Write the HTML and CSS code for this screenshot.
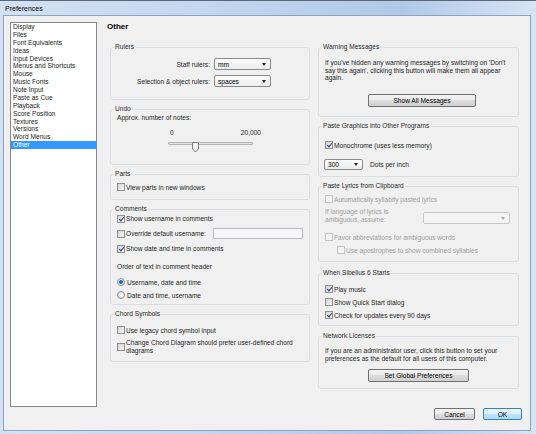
FILE: index.html
```html
<!DOCTYPE html>
<html>
<head>
<meta charset="UTF-8">
<title>Preferences</title>
<link rel="stylesheet" href="styles.css">
</head>
<body>
<div class="window">
	<div class="titlebar">Preferences</div>
	<div class="client">
		<ul class="pages">
			<li>Display</li>
			<li>Files</li>
			<li>Font Equivalents</li>
			<li>Ideas</li>
			<li>Input Devices</li>
			<li>Menus and Shortcuts</li>
			<li>Mouse</li>
			<li>Music Fonts</li>
			<li>Note Input</li>
			<li>Paste as Cue</li>
			<li>Playback</li>
			<li>Score Position</li>
			<li>Textures</li>
			<li>Versions</li>
			<li>Word Menus</li>
			<li class="sel">Other</li>
		</ul>
		<div class="main">
			<h1>Other</h1>
			<div class="cols">
				<div class="col">
					<fieldset class="g-rulers">
						<legend>Rulers</legend>
						<div class="field"><label>Staff rulers:</label><div class="select">mm</div></div>
						<div class="field"><label>Selection &amp; object rulers:</label><div class="select">spaces</div></div>
					</fieldset>
					<fieldset class="g-undo">
						<legend>Undo</legend>
						<div class="line">Approx. number of notes:</div>
						<div class="ticks"><span>0</span><span>20,000</span></div>
						<div class="slider">
							<div class="track"></div>
							<svg class="thumb" style="left:24px" width="7" height="11" viewBox="0 0 7 11"><path d="M0.5 0.5h6v6.5l-3 3-3-3z" fill="#f3f3f3" stroke="#7b7b7b"/></svg>
						</div>
					</fieldset>
					<fieldset class="g-parts">
						<legend>Parts</legend>
						<div class="row chk"><span class="box"></span>View parts in new windows</div>
					</fieldset>
					<fieldset class="g-comments">
						<legend>Comments</legend>
						<div class="row chk on"><span class="box"></span>Show username in comments</div>
						<div class="row chk"><span class="box"></span>Override default username:<span class="input"></span></div>
						<div class="row chk on"><span class="box"></span>Show date and time in comments</div>
						<div class="line order">Order of text in comment header</div>
						<div class="row radio on"><span class="dot"></span>Username, date and time</div>
						<div class="row radio"><span class="dot"></span>Date and time, username</div>
					</fieldset>
					<fieldset class="g-chords">
						<legend>Chord Symbols</legend>
						<div class="row chk"><span class="box"></span>Use legacy chord symbol input</div>
						<div class="row chk tall"><span class="box"></span><span>Change Chord Diagram should prefer user-defined chord<br>diagrams</span></div>
					</fieldset>
				</div>
				<div class="col">
					<fieldset class="g-warn">
						<legend>Warning Messages</legend>
						<p class="note">If you've hidden any warning messages by switching on 'Don't<br>say this again', clicking this button will make them all appear<br>again.</p>
						<button class="btn show-all">Show All Messages</button>
					</fieldset>
					<fieldset class="g-graphics">
						<legend>Paste Graphics into Other Programs</legend>
						<div class="row chk on"><span class="box"></span>Monochrome (uses less memory)</div>
						<div class="dpi"><div class="select">300</div><span>Dots per inch</span></div>
					</fieldset>
					<fieldset class="g-lyrics">
						<legend>Paste Lyrics from Clipboard</legend>
						<div class="row chk off"><span class="box"></span>Automatically syllabify pasted lyrics</div>
						<div class="lang"><span>If language of lyrics is<br>ambiguous, assume:</span><div class="select off"></div></div>
						<div class="row chk off favor"><span class="box"></span>Favor abbreviations for ambiguous words</div>
						<div class="row chk off sub"><span class="box"></span>Use apostrophes to show combined syllables</div>
					</fieldset>
					<fieldset class="g-start">
						<legend>When Sibelius 6 Starts</legend>
						<div class="row chk on"><span class="box"></span>Play music</div>
						<div class="row chk"><span class="box"></span>Show Quick Start dialog</div>
						<div class="row chk on"><span class="box"></span>Check for updates every 90 days</div>
					</fieldset>
					<fieldset class="g-network">
						<legend>Network Licenses</legend>
						<p class="note">If you are an administrator user, click this button to set your<br>preferences as the default for all users of this computer.</p>
						<button class="btn global">Set Global Preferences</button>
					</fieldset>
				</div>
			</div>
			<div class="footer">
				<button class="btn cancel">Cancel</button>
				<button class="btn ok">OK</button>
			</div>
		</div>
	</div>
</div>
</body>
</html>
```

FILE: styles.css
```css
*{
	box-sizing: border-box;
}
body{
	margin: 0;
	font-family: "Liberation Sans", Arial, sans-serif;
	font-size: 6.6px;
	color: #1e1e1e;
	background: #fff;
}
.window{
	width: 536px;
	height: 434px;
	padding: 0 5px 3px 3px;
	border-top: 1px solid #5d6876;
	background: linear-gradient(to right, #d3e2f3, #c0d5ee 45%, #b0c9e8 75%, #d6e4f5);
	display: flex;
	flex-direction: column;
}
.titlebar{
	height: 14px;
	line-height: 15px;
	padding-left: 2px;
	font-size: 7px;
	color: #000;
}
.client{
	flex: 1;
	background: #f0f0f0;
	border: 1px solid #8ea3bd;
	display: grid;
	grid-template-columns: 87px 1fr;
	align-items: start;
	padding: 6px 8px 0 6px;
}

/* page list */
.pages{
	list-style: none;
	margin: 0;
	padding: 0;
	height: 385px;
	border: 1px solid #828790;
	background: #fff;
}
.pages li{
	line-height: 7.87px;
	padding-left: 2px;
	white-space: nowrap;
}
.pages li.sel{
	background: #3399ff;
	color: #fff;
}

.main{
	padding-left: 13px;
	display: flex;
	flex-direction: column;
}
h1{
	margin: 0 0 11px -3px;
	font-size: 8px;
	line-height: 10px;
	color: #000;
}
.cols{
	display: grid;
	grid-template-columns: 200px 201px;
	column-gap: 8px;
	align-items: start;
}
.col{
	display: flex;
	flex-direction: column;
	gap: 5px;
}

/* group boxes */
fieldset{
	margin: 0;
	padding: 0 6px;
	border: 1px solid #dcdee1;
	border-radius: 3px;
	min-width: 0;
}
legend{
	padding: 0 1px;
	margin-left: -3px;
	line-height: 8px;
	color: #2a2a2a;
}
.line{
	line-height: 8px;
	white-space: nowrap;
}
.note{
	margin: 0;
	line-height: 7.7px;
	white-space: nowrap;
}
.row{
	display: flex;
	align-items: center;
	height: 10px;
	white-space: nowrap;
}
.row.tall{
	height: 16px;
	line-height: 8px;
}

/* checkboxes and radios */
.box{
	position: relative;
	flex: none;
	width: 8px;
	height: 8px;
	margin-right: 1px;
	border: 1px solid #8f8f8f;
	background: linear-gradient(135deg, #d2d2d2, #f9f9f9);
}
.chk.on .box::after{
	content: "";
	position: absolute;
	left: 2px;
	top: 0;
	width: 2px;
	height: 4px;
	border: solid #25397a;
	border-width: 0 1.4px 1.4px 0;
	transform: rotate(40deg);
}
.chk.off{
	color: #9d9d9d;
}
.chk.off .box{
	border-color: #c3c3c3;
	background: #f4f4f4;
}
.dot{
	flex: none;
	width: 8px;
	height: 8px;
	margin-right: 2px;
	border: 1px solid #8f8f8f;
	border-radius: 50%;
	background: radial-gradient(circle at 60% 60%, #fdfdfd, #d6d6d6);
}
.radio.on .dot{
	background: radial-gradient(circle, #1e5cb6 0, #2f78d0 1.6px, #eef3fa 2.4px);
}

/* dropdowns, inputs, buttons */
.select{
	display: flex;
	align-items: center;
	justify-content: space-between;
	padding: 0 4px 0 3px;
	border: 1px solid #8a8a8a;
	border-radius: 2px;
	background: linear-gradient(#fbfbfb, #ececec);
	color: #000;
}
.select::after{
	content: "";
	margin-left: auto;
	border-left: 2.5px solid transparent;
	border-right: 2.5px solid transparent;
	border-top: 3px solid #222;
}
.select.off{
	border-color: #c8c8c8;
	background: #f4f4f4;
}
.select.off::after{
	border-top-color: #a5a5a5;
}
.input{
	width: 90px;
	height: 11px;
	margin-left: auto;
	border: 1px solid #b9bcc2;
	background: #f7f7f7;
}
.btn{
	display: block;
	font: inherit;
	color: #000;
	height: 13px;
	padding: 0;
	border: 1px solid #707070;
	border-radius: 2px;
	background: linear-gradient(#f3f3f3, #ebebeb 45%, #dddddd 50%, #cfcfcf);
}

/* rulers */
.g-rulers{
	padding-top: 7px;
	padding-bottom: 12px;
}
.field{
	display: flex;
	align-items: center;
	height: 12px;
}
.field + .field{
	margin-top: 5px;
}
.field label{
	width: 93px;
	margin-right: 4px;
	text-align: right;
	white-space: nowrap;
}
.field .select{
	width: 57px;
	height: 12px;
}

/* undo */
.g-undo{
	padding-top: 1px;
	padding-bottom: 11px;
}
.ticks{
	display: flex;
	justify-content: space-between;
	width: 91px;
	margin: 7px 0 0 53px;
	line-height: 8px;
}
.slider{
	position: relative;
	width: 85px;
	height: 11px;
	margin: 5px 0 0 51px;
}
.track{
	margin-top: 4px;
	height: 3px;
	border: 1px solid #b4b4b4;
	border-radius: 1px;
	background: #e4e4e4;
}
.thumb{
	position: absolute;
	top: 0;
}

.g-parts{
	padding-top: 4px;
	padding-bottom: 7px;
}

/* comments */
.g-comments{
	padding-bottom: 4px;
}
.g-comments .row{
	height: 11px;
}
.g-comments .row + .row{
	margin-top: 4px;
}
.g-comments .order{
	margin-top: 9px;
}
.g-comments .radio{
	height: 10px;
	margin-top: 6px;
}
.g-comments .radio + .radio{
	margin-top: 3px;
}

.g-chords{
	padding-top: 7px;
	padding-bottom: 6px;
}
.g-chords .row + .row{
	margin-top: 4px;
}

/* right column */
.g-warn{
	padding-top: 8px;
	padding-bottom: 9px;
}
.show-all{
	width: 108px;
	margin: 12px 0 0 43px;
}
.g-graphics{
	padding-top: 10px;
	padding-bottom: 6px;
}
.dpi{
	display: flex;
	align-items: center;
	height: 11px;
	margin-top: 9px;
}
.dpi .select{
	width: 39px;
	height: 11px;
	margin-left: -1px;
}
.dpi span{
	margin-left: 7px;
}
.g-lyrics{
	padding-top: 4px;
	padding-bottom: 6px;
}
.lang{
	display: flex;
	align-items: flex-end;
	height: 16px;
	margin-top: 4px;
	line-height: 8px;
	color: #9d9d9d;
	white-space: nowrap;
}
.lang .select{
	width: 87px;
	height: 12px;
	margin: 0 2px 0 auto;
}
.g-lyrics .favor{
	margin-top: 8px;
}
.g-lyrics .sub{
	margin-top: 3px;
	padding-left: 12px;
}
.g-start{
	margin-top: 2px;
	padding-top: 7px;
	padding-bottom: 5px;
}
.g-start .row + .row{
	margin-top: 3px;
}
.g-network{
	margin-top: 1px;
	padding-top: 7px;
	padding-bottom: 6px;
}
.g-network .note{
	line-height: 8px;
}
.global{
	width: 101px;
	margin: 6px 0 0 43px;
}

/* dialog buttons */
.footer{
	display: flex;
	justify-content: flex-end;
	gap: 8px;
	margin-top: 19px;
}
.footer .btn{
	height: 12px;
}
.cancel{
	width: 41px;
}
.ok{
	width: 39px;
	border-color: #3c7fb1;
	background: linear-gradient(#eaf6fd, #d9f0fc 45%, #bee6fd 50%, #a7d9f5);
}
```
